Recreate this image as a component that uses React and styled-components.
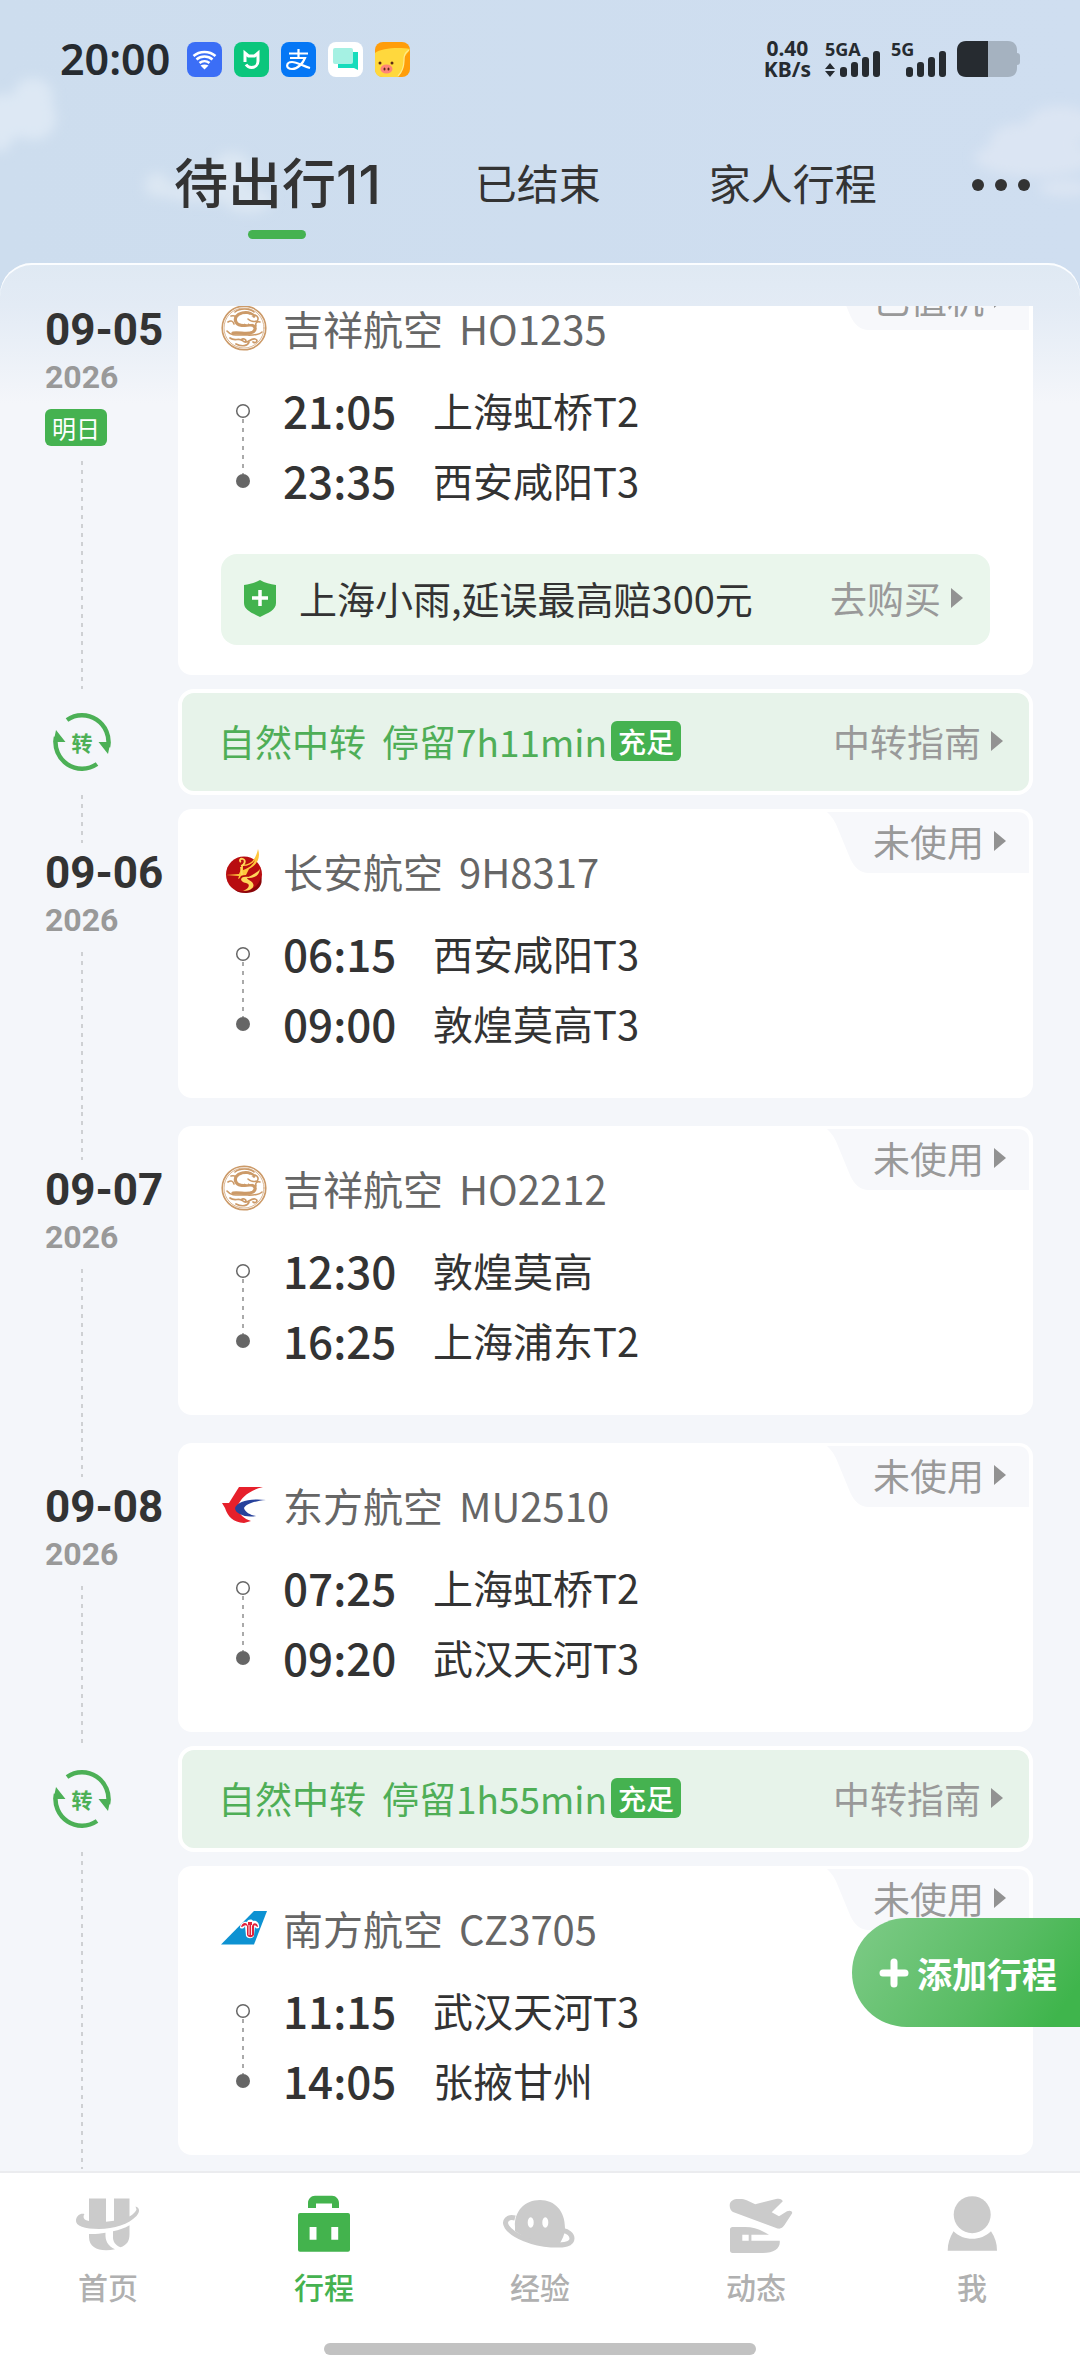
import React, {useState} from 'react';
import styled, {createGlobalStyle} from 'styled-components';

const GlobalStyle = createGlobalStyle`
    * {
        box-sizing: border-box;
    }

    body {
        margin: 0;
        background: #f4f6fa;
        font-family: "Noto Sans CJK SC", "Noto Sans", sans-serif;
        color: #333;
    }

    button {
        font-family: inherit;
        border: 0;
        padding: 0;
        margin: 0;
        background: none;
        cursor: pointer;
    }
`;

const Screen = styled.div`
    display: flex;
    flex-direction: column;
    height: 100vh;
    overflow: hidden;
    position: relative;
    background: linear-gradient(90deg, #cdddee, #cfdef0);
`;

const Sky = styled.svg`
    position: absolute;
    top: 0;
    width: 180px;
    height: 263px;
    left: ${props => props.$left};
    right: ${props => props.$right};
`;

/* status bar */

const StatusBar = styled.header`
    position: relative;
    display: flex;
    align-items: center;
    height: 78px;
    margin-top: 20px;
    padding: 0 60px;
    color: #262b30;
`;

const Clock = styled.time`
    font-family: "Noto Sans", sans-serif;
    font-size: 43px;
    font-weight: 600;
    line-height: 44px;
    margin-right: 17px;
`;

const AppIcons = styled.div`
    display: flex;
    gap: 12px;
    flex: 1;
`;

const AppIcon = styled.svg`
    width: 35px;
    height: 35px;
`;

const Speed = styled.div`
    display: flex;
    flex-direction: column;
    font-family: "Noto Sans", sans-serif;
    font-size: 21px;
    font-weight: 700;
    line-height: 21px;
    text-align: center;
    margin-right: 14px;
`;

const Signal = styled.div`
    position: relative;
    width: 56px;
    height: 36px;
    margin-right: 10px;
`;

const SignalName = styled.span`
    position: absolute;
    left: 0;
    top: 0;
    font-family: "Noto Sans", sans-serif;
    font-size: 18px;
    font-weight: 700;
    line-height: 16px;
`;

const Bars = styled.svg`
    position: absolute;
    right: 0;
    bottom: 0;
    width: 56px;
    height: 26px;
`;

const Battery = styled.svg`
    width: 63px;
    height: 36px;
`;

/* tabs */

const Tabs = styled.nav`
    position: relative;
    display: flex;
    align-items: center;
    height: 165px;
    padding: 8px 50px 0 174px;
`;

const Tab = styled.button`
    position: relative;
    color: #333;
    font-family: Inter, "Noto Sans CJK SC", sans-serif;
    font-size: ${props => (props.$active ? '54px' : '42px')};
    font-weight: ${props => (props.$active ? 500 : 400)};
    line-height: 60px;
    white-space: nowrap;
    margin-right: ${props => (props.$active ? '94px' : '108px')};

    &:last-of-type {
        margin-right: 0;
    }

    &::after {
        content: '';
        display: ${props => (props.$active ? 'block' : 'none')};
        position: absolute;
        left: calc(50% - 29px);
        bottom: -24px;
        width: 58px;
        height: 9px;
        border-radius: 5px;
        background: #45b250;
    }
`;

const TabGroup = styled.div`
    display: flex;
    align-items: center;
`;

const MoreButton = styled.button`
    display: flex;
    justify-content: space-between;
    flex-shrink: 0;
    width: 58px;
    margin-left: auto;
`;

const Dot = styled.span`
    width: 12px;
    height: 12px;
    border-radius: 50%;
    background: #333;
`;

/* trip list */

const Panel = styled.main`
    position: relative;
    flex: 1;
    min-height: 0;
    padding-top: 43px;
    border-radius: 32px 32px 0 0;
    background: linear-gradient(#dfe9f3, #e3ebf5 43px, #f4f6fa 140px);
    box-shadow: inset 0 2px 0 #fbfdff;
`;

const Scroller = styled.div`
    height: 100%;
    overflow: hidden;
`;

const TripList = styled.ol`
    list-style: none;
    margin: -54px 0 0;
    padding: 0 47px 0 0;
`;

const Item = styled.li`
    display: flex;
`;

const Side = styled.div`
    display: flex;
    flex-direction: column;
    align-items: flex-start;
    width: 178px;
    flex-shrink: 0;
    padding-left: 45px;
`;

const Dashes = styled.span`
    width: 2px;
    margin-left: 36px;
    flex: ${props => (props.$length ? '0 0 ' + props.$length : '1')};
    background: repeating-linear-gradient(#ced0d3 0 4px, transparent 4px 9px);
`;

const DateText = styled.strong`
    font-family: Roboto, sans-serif;
    font-size: 44px;
    font-weight: 700;
    line-height: 60px;
`;

const Year = styled.span`
    font-family: Roboto, sans-serif;
    font-size: 32px;
    font-weight: 700;
    line-height: 34px;
    color: #999;
    margin-bottom: 15px;
`;

const Badge = styled.span`
    padding: 0 7px;
    border-radius: 6px;
    background: #45b250;
    color: #fff;
    font-size: ${props => (props.$large ? '28px' : '24px')};
    font-weight: ${props => (props.$large ? 500 : 400)};
    line-height: ${props => (props.$large ? '40px' : '37px')};
    margin-bottom: ${props => (props.$large ? 0 : '15px')};
`;

const Card = styled.article`
    position: relative;
    flex: 1;
    min-height: 289px;
    margin: 14px 0;
    padding: 33px 43px 30px;
    border-radius: 14px;
    background: #fff;
`;

const Status = styled.button`
    position: absolute;
    top: 3px;
    right: 4px;
    width: 202px;
    height: 61px;
    display: flex;
    align-items: center;
    justify-content: flex-end;
    gap: 10px;
    padding: 0 23px 4px 0;
    color: #999;
    font-size: 37px;
    line-height: 56px;
`;

const StatusShape = styled.svg`
    position: absolute;
    inset: 0;
    width: 100%;
    height: 100%;
`;

const Label = styled.span`
    position: relative;
`;

const Arrow = styled.i`
    position: relative;
    width: 0;
    height: 0;
    border-left: 12px solid #929292;
    border-top: 10px solid transparent;
    border-bottom: 10px solid transparent;
`;

const Airline = styled.h2`
    display: flex;
    align-items: center;
    gap: 16px;
    margin: 0;
    height: 60px;
    padding-bottom: 3px;
    color: #666;
    font-size: 40px;
    font-weight: 400;
    line-height: 56px;
`;

const Logo = styled.svg`
    width: 46px;
    height: 46px;
`;

const Route = styled.div`
    display: flex;
    gap: 32px;
    margin-top: 17px;
    padding-left: 14px;
`;

const Track = styled.svg`
    width: 16px;
    height: 140px;
`;

const Stops = styled.div`
    display: flex;
    flex-direction: column;
`;

const Stop = styled.div`
    display: flex;
    align-items: center;
    height: 70px;
    padding-bottom: 3px;
    font-size: 40px;
    line-height: 60px;
`;

const Time = styled.time`
    width: 150px;
    font-size: 44px;
    font-weight: 500;
`;

const Insurance = styled.div`
    display: flex;
    align-items: center;
    height: 91px;
    margin-top: 38px;
    padding: 0 27px 4px 22px;
    border-radius: 16px;
    background: #eaf6ec;
    font-size: 38px;
    line-height: 60px;
`;

const Shield = styled.svg`
    width: 34px;
    height: 38px;
    margin-right: 22px;
`;

const LinkButton = styled.button`
    display: flex;
    align-items: center;
    gap: 10px;
    margin-left: auto;
    color: #999;
    font-size: 37px;
    line-height: 60px;
`;

const Transfer = styled.section`
    display: flex;
    align-items: center;
    flex: 1;
    height: 106px;
    padding: 0 26px 3px 36px;
    border: 4px solid #fff;
    border-radius: 16px;
    background: #e7f3ea;
    color: #4fae57;
    font-size: 37px;
    line-height: 60px;
`;

const Stay = styled.span`
    margin: 0 4px 0 16px;
`;

const TransferMark = styled.div`
    display: grid;
    place-items: center;
    width: 58px;
    height: 58px;
    margin: 24px 0 0 8px;
    color: #4cb056;
    font-size: 21px;
    font-weight: 700;
    line-height: 24px;

    > * {
        grid-area: 1 / 1;
    }
`;

const AddButton = styled.button`
    position: absolute;
    right: 0;
    bottom: 349px;
    display: flex;
    align-items: center;
    gap: 8px;
    height: 109px;
    padding: 0 23px 0 27px;
    border-radius: 55px 0 0 55px;
    background: linear-gradient(125deg, #7ecb87 0%, #58bc63 60%, #3fb54c 90%);
    color: #fff;
    font-size: 35px;
    font-weight: 700;
    line-height: 60px;
`;

/* bottom navigation */

const BottomBar = styled.nav`
    position: relative;
    display: flex;
    height: 205px;
    flex-shrink: 0;
    border-top: 2px solid #ebecef;
    background: #fff;

    &::after {
        content: '';
        position: absolute;
        left: 30%;
        right: 30%;
        bottom: 21px;
        height: 12px;
        border-radius: 6px;
        background: #c2c2c2;
    }
`;

const NavItem = styled.a`
    flex: 1;
    display: flex;
    flex-direction: column;
    align-items: center;
    padding-top: 21px;
    color: ${props => (props.$active ? '#45b250' : '#b0b0b0')};
    font-size: 30px;
    font-weight: 500;
    line-height: 40px;
    text-decoration: none;
`;

const NavIcon = styled.svg`
    width: 72px;
    height: 60px;
    margin-bottom: 12px;
    overflow: visible;
    fill: ${props => (props.$active ? '#43b34d' : '#cbcbcb')};
`;

const logos = {
    juneyao: (
        <g fill="none" stroke="#cc9a68" strokeLinecap="round">
            <circle cx="23" cy="23" r="21.8" strokeWidth="1.6" />
            <circle cx="23" cy="23" r="20" strokeWidth="0.7" />
            <path strokeWidth="3.2" d="M33 11c-4-4-8-4-12-3-5 1-8 5-6 9 2 5 10 3 14 3 5 0 7 4 3 7-5 3-13 0-20 1" />
            <path strokeWidth="1.6" d="M6 26c4 5 10 4 17 4s14 1 18-3M14 7c5-4 14-4 19 0M10 11c4-1 6 1 5 3M7 17c3-2 5-1 6 2M34 10c3 1 4 4 2 6-3 1-7 0-9-2M39 17c-3-1-5 1-4 4" />
            <path strokeWidth="1.7" d="M9 33c5 4 9-1 13 3s7-3 12-2c4 1 1 5-2 3M15 39c6 3 12 2 13-2M20 35c2-2 5-1 5 1" />
            <path strokeWidth="1.2" stroke="#fff" strokeDasharray="2 2" d="M31 11c-7-3-13-1-13 4 0 4 9 4 13 3" />
        </g>
    ),
    changan: (
        <g>
            <circle cx="23" cy="26.5" r="18" fill="#b80d10" />
            <path fill="#8a0508" d="M13 41c9 6 24 1 27-12 3 9-5 16-15 16-5 0-9-1-12-4z" />
            <path fill="#ffc63c" d="M37 1c3 9-1 16-9 20l-3 6c-4 0-6 1-6 3l-2 1 1-3-13-1 13-1c2-4 2-6 3-9 9 0 14-6 16-16z" />
            <path fill="#b80d10" d="M22 18c5 0 9-2 12-6-2 5-6 8-12 10z" />
            <path fill="#ffd75a" d="M39 21c-3 4-8 6-14 9 9 0 13-2 14-9zM28 29c-10-2-10 5-3 6 5 1 3 6-3 8 11 0 14-7 6-11-2-1-3-2 0-3z" />
            <path fill="none" stroke="#ffd75a" strokeWidth="1.8" d="M20 18c4-1 5-6 2-7s-4 2-2 3M20 19l1 8" />
        </g>
    ),
    eastern: (
        <g>
            <path fill="#e6202b" d="M18 5h24C29 8 20 15 16 25c2 7 7 12 14 14l-7 2C12 40 7 35 4 26l-3-5h7z" />
            <path fill="#27419b" d="M45 18c-11 1-20 4-22 8 1 4 6 7 12 8-10 2-21-2-21-8 2-6 14-10 31-8z" />
        </g>
    ),
    southern: (
        <g>
            <path fill="#0d92d2" d="M0 39.500 33 6h13L33 39.500z" />
            <path fill="#fff" d="M19 23c0-5 4-7 7-6 1-3 5-3 6-1 4-1 7 3 6 7-3 1-4 0-4-2l-1 10c-2 3-6 3-8 0l-1-10c-1 3-3 3-5 2z" />
            <path fill="#e0223b" d="M20 22c1-4 4-5 6-3l1 2V17h4v4l1-2c2-2 5 0 5 3-2 0-3-3-4-1v9c-2 3-5 3-7 0v-9c-2-2-3 1-6 1z" />
            <path stroke="#fff" strokeWidth="0.9" d="M28 20v10M30.500 20v10" />
        </g>
    )
};

const trips = [
    {
        date: '09-05', tag: '明日', status: '已值机', logo: 'juneyao', airline: '吉祥航空', flight: 'HO1235',
        stops: [['21:05', '上海虹桥T2'], ['23:35', '西安咸阳T3']],
        insurance: '上海小雨,延误最高赔300元'
    },
    {transfer: '停留7h11min'},
    {
        date: '09-06', status: '未使用', logo: 'changan', airline: '长安航空', flight: '9H8317',
        stops: [['06:15', '西安咸阳T3'], ['09:00', '敦煌莫高T3']]
    },
    {
        date: '09-07', status: '未使用', logo: 'juneyao', airline: '吉祥航空', flight: 'HO2212',
        stops: [['12:30', '敦煌莫高'], ['16:25', '上海浦东T2']]
    },
    {
        date: '09-08', status: '未使用', logo: 'eastern', airline: '东方航空', flight: 'MU2510',
        stops: [['07:25', '上海虹桥T2'], ['09:20', '武汉天河T3']]
    },
    {transfer: '停留1h55min'},
    {
        status: '未使用', logo: 'southern', airline: '南方航空', flight: 'CZ3705',
        stops: [['11:15', '武汉天河T3'], ['14:05', '张掖甘州']]
    }
];

const navItems = [
    {
        name: '首页',
        icon: (
            <g>
                <path d="M17 4.500h17v23.200l8-1V4.500h15.500v18c4-2.500 6.500-5 7-7l-1-3c4 1 5 5 1 9.500C57 30 42 35 27 35 13 35 3 32 4 26c.5-4 4-7 8.500-6-2 3-1 6 4.500 7z" />
                <path d="M17 40c6 .2 11-.3 16.500-1.300C33 47 36 52 43 55.300 29 58 17 55 17 43zM41 37.300c6-1.300 12-3.300 16.500-6v9c0 7-3 11-9 13-5-2-8-6-7.500-11z" />
            </g>
        )
    },
    {
        name: '行程',
        icon: (
            <g>
                <path d="M20 14V9c0-4 3-7.300 7-7.300h17c4 0 7 3.300 7 7.300v5h-7V9.500H28V14z" />
                <path fillRule="evenodd" d="M12 19h48a2 2 0 0 1 2 2v34.700a2 2 0 0 1-2 2H12a2 2 0 0 1-2-2V21a2 2 0 0 1 2-2zM21.600 33v12.700h6.900V33zM43.300 33v12.700h6.900V33z" />
            </g>
        )
    },
    {
        name: '经验',
        icon: (
            <g>
                <path fillRule="evenodd" d="M11 33C10 17 21 6 36 6s25 11 25 28c0 6-3 12-6 17C38 52 23 46 11 37zM26.700 23.300c-4 0-4 10.500 0 10.500s4-10.500 0-10.500zM41.300 23.300c-4 0-4 10.500 0 10.500s4-10.500 0-10.500z" />
                <path fill="none" stroke="#cbcbcb" strokeWidth="5" d="M11 24C4 22-1 27 3 33c6 9 26 17 44 18 14 .5 21-1 21-6.500 0-4-4-7-9-8" />
            </g>
        )
    },
    {
        name: '动态',
        icon: (
            <g>
                <path d="M9.700 11C10 6 15 4.500 19.700 5c3 0 5 .3 7 1.300l8.500 4L56 5c4-1 6 .5 6.800 2.200L51.700 18.300l7.300 4 8-5c3-1.500 6 0 5 2.300l-7.500 11.500c-2 3-4 4-7 3.400L13 18c-2-1-3.500-3.500-3.300-7z" />
                <path fillRule="evenodd" d="M10 35.500c0-1.500 1-2.500 2.500-2.500H25c9 0 16 3 24 7.700H31.400v6.100h28.300c1 7-5 12.200-17 12.200H12.500c-1.500 0-2.500-1-2.500-2.500zM22.300 40.700v6.100h6.400v-6.100z" />
            </g>
        )
    },
    {
        name: '我',
        icon: (
            <g>
                <circle cx="36.200" cy="20.700" r="18.500" />
                <path d="M17.500 37.300c10 10 27.500 10 37.500 0 4 6 6 12 6 19.400H11.700c0-7 2-13 5.800-19.400z" />
            </g>
        )
    }
];

function SignalBars({arrows}) {
    return (
        <Bars viewBox="0 0 56 26" fill="#262b30">
            {arrows && <path d="M5 12l5 6H0zM5 26l5-6H0z" />}
            <rect x="15" y="16" width="7" height="10" rx="3" />
            <rect x="26" y="11" width="7" height="15" rx="3" />
            <rect x="37" y="6" width="7" height="20" rx="3" />
            <rect x="48" y="0" width="7" height="26" rx="3" />
        </Bars>
    );
}

function StatusIcons() {
    return (
        <AppIcons>
            <AppIcon viewBox="0 0 35 35">
                <rect width="35" height="35" rx="8" fill="#3b6ef6" />
                <g fill="none" stroke="#fff" strokeWidth="2.500">
                    <path d="M6.500 14c6-5.500 16-5.500 22 0M9.500 17.500c4.500-4 11.500-4 16 0M12.500 21c3-2.500 7-2.500 10 0" />
                </g>
                <path fill="#fff" d="M13.500 23.500c2.500-1.500 5.500-1.500 8 0l-4 4z" />
            </AppIcon>
            <AppIcon viewBox="0 0 35 35">
                <rect width="35" height="35" rx="8" fill="#0bc67c" />
                <path fill="none" stroke="#fff" strokeWidth="3" d="M11 20v-9l3.500 3h6l3.500-3v8c0 4-3 6.500-6.500 6.500-2.500 0-4.500-1.500-5.500-3" />
            </AppIcon>
            <AppIcon viewBox="0 0 35 35">
                <rect width="35" height="35" rx="8" fill="#0577f5" />
                <path fill="none" stroke="#fff" strokeWidth="2.200" d="M8 11.500h19M17.500 7v9M9 16h15c-2 5-7 11-13 11-7 0-6-7 0-7 5 0 11 4 18 6" />
            </AppIcon>
            <AppIcon viewBox="0 0 35 35">
                <rect width="35" height="35" rx="8" fill="#fff" />
                <path fill="#16dcbc" d="M12 10h18v18l-4-2H10V12z" />
                <rect x="5" y="6" width="20" height="16" rx="2" fill="#a5f1e3" />
            </AppIcon>
            <AppIcon viewBox="0 0 35 35">
                <rect width="35" height="35" rx="8" fill="#ff9d0a" />
                <path fill="#ffd83d" d="M0 11c6-5 24-6 35-4-2 4-4 5-6 9 1 8-2 15-6 19H8c-5 0-8-3-8-8z" />
                <path fill="none" stroke="#ffe98a" strokeWidth="1.200" d="M34 8c-4 3-5 5-5 10 0 7-2 12-6 16" />
                <ellipse cx="11.500" cy="27" rx="6" ry="4.500" fill="#ff8577" />
                <g fill="#5b2b16">
                    <circle cx="5" cy="21" r="1.500" />
                    <circle cx="17" cy="21" r="1.500" />
                    <ellipse cx="9.500" cy="27" rx="1" ry="1.500" />
                    <ellipse cx="13.500" cy="27" rx="1" ry="1.500" />
                </g>
            </AppIcon>
        </AppIcons>
    );
}

function Clouds() {
    return (
        <>
            <Sky $left="0" viewBox="0 0 180 263" aria-hidden="true">
                <filter id="soft" x="-30%" y="-50%" width="160%" height="200%"><feGaussianBlur stdDeviation="6" /></filter>
                <g fill="#dde8f4" filter="url(#soft)">
                    <circle cx="33" cy="98" r="20" />
                    <circle cx="34" cy="118" r="22" />
                    <circle cx="4" cy="118" r="24" />
                    <circle cx="0" cy="142" r="10" />
                </g>
            </Sky>
            <Sky $left="130px" viewBox="0 0 180 263" aria-hidden="true">
                <g fill="#dce7f3" filter="url(#soft)">
                    <circle cx="27" cy="185" r="12" />
                    <circle cx="102" cy="172" r="20" />
                    <ellipse cx="75" cy="192" rx="46" ry="10" />
                    <ellipse cx="118" cy="200" rx="24" ry="13" />
                </g>
            </Sky>
            <Sky $right="0" viewBox="0 0 180 263" aria-hidden="true">
                <g fill="#dbe5f3" filter="url(#soft)">
                    <ellipse cx="160" cy="126" rx="34" ry="20" />
                    <ellipse cx="120" cy="142" rx="30" ry="18" />
                    <ellipse cx="135" cy="158" rx="60" ry="18" />
                    <ellipse cx="165" cy="188" rx="26" ry="8" />
                </g>
            </Sky>
        </>
    );
}

function TransferItem({stay}) {
    return (
        <Item>
            <Side>
                <TransferMark>
                    <svg width="58" height="58" viewBox="0 0 58 58" aria-hidden="true">
                        <g fill="none" stroke="currentColor" strokeWidth="4.500">
                            <path d="M14 7A26.500 26.500 0 0 1 55 34" />
                            <path d="M44 51A26.500 26.500 0 0 1 3 24" />
                        </g>
                        <path fill="currentColor" d="M45.500 29h12L55 41zM12.500 29H.500L3 17z" />
                    </svg>
                    <span>转</span>
                </TransferMark>
            </Side>
            <Transfer>
                <span>自然中转</span>
                <Stay>{stay}</Stay>
                <Badge $large>充足</Badge>
                <LinkButton>中转指南<Arrow /></LinkButton>
            </Transfer>
        </Item>
    );
}

function FlightItem({trip}) {
    return (
        <Item>
            <Side>
                {trip.date && (
                    <>
                        <Dashes $length="48px" />
                        <DateText>{trip.date}</DateText>
                        <Year>2026</Year>
                    </>
                )}
                {trip.tag && <Badge>{trip.tag}</Badge>}
                <Dashes />
            </Side>
            <Card>
                <Status>
                    <StatusShape viewBox="0 0 202 61" preserveAspectRatio="none" aria-hidden="true">
                        <path fill="#f7f8fb" d="M0 0h190q12 0 12 12v49H42c-9 0-15-6-19-15L11 17Q7 6 0 0z" />
                    </StatusShape>
                    <Label>{trip.status}</Label>
                    <Arrow />
                </Status>
                <Airline>
                    <Logo viewBox="0 0 46 46" aria-hidden="true">{logos[trip.logo]}</Logo>
                    <span>{trip.airline}</span>
                    <span>{trip.flight}</span>
                </Airline>
                <Route>
                    <Track viewBox="0 0 16 140" aria-hidden="true">
                        <path stroke="#aaa" strokeWidth="2" strokeDasharray="4 5" d="M8 43v55" />
                        <circle cx="8" cy="35" r="6.300" fill="#fff" stroke="#666" strokeWidth="1.500" />
                        <circle cx="8" cy="105" r="7" fill="#666" />
                    </Track>
                    <Stops>
                        {trip.stops.map(([time, place]) => (
                            <Stop key={time}>
                                <Time>{time}</Time>
                                {place}
                            </Stop>
                        ))}
                    </Stops>
                </Route>
                {trip.insurance && (
                    <Insurance>
                        <Shield viewBox="0 0 34 38" aria-hidden="true">
                            <path fill="#43b34e" d="M17 1c5 3 10 4 16 5v18c0 7-8 10-16 14C9 34 1 31 1 24V6c6-1 11-2 16-5z" />
                            <path stroke="#fff" strokeWidth="3.500" d="M17 11v16M9 19h16" />
                        </Shield>
                        <span>{trip.insurance}</span>
                        <LinkButton>去购买<Arrow /></LinkButton>
                    </Insurance>
                )}
            </Card>
        </Item>
    );
}

const tabNames = ['待出行11', '已结束', '家人行程'];

function App() {
    const [tab, setTab] = useState(0);

    return (
        <Screen>
            <GlobalStyle />
            <Clouds />
            <StatusBar>
                <Clock>20:00</Clock>
                <StatusIcons />
                <Speed>
                    <span>0.40</span>
                    <span>KB/s</span>
                </Speed>
                <Signal>
                    <SignalName>5GA</SignalName>
                    <SignalBars arrows />
                </Signal>
                <Signal>
                    <SignalName>5G</SignalName>
                    <SignalBars />
                </Signal>
                <Battery viewBox="0 0 63 36">
                    <path fill="#a5b2c0" d="M31 0h20c6 0 9 4 9 9v3c2 0 3 1 3 3v6c0 2-1 3-3 3v3c0 5-3 9-9 9H31z" />
                    <path fill="#262b30" d="M9 0h22v36H9c-6 0-9-4-9-9V9c0-5 3-9 9-9z" />
                </Battery>
            </StatusBar>
            <Tabs>
                <TabGroup>
                    {tabNames.map((name, i) => (
                        <Tab key={name} $active={i === tab} onClick={() => setTab(i)}>{name}</Tab>
                    ))}
                </TabGroup>
                <MoreButton aria-label="更多"><Dot /><Dot /><Dot /></MoreButton>
            </Tabs>
            <Panel>
                <Scroller>
                    <TripList>
                        {trips.map((trip, i) => (
                            trip.transfer
                                ? <TransferItem key={i} stay={trip.transfer} />
                                : <FlightItem key={i} trip={trip} />
                        ))}
                    </TripList>
                </Scroller>
            </Panel>
            <AddButton>
                <svg width="30" height="30" viewBox="0 0 30 30" aria-hidden="true">
                    <path stroke="#fff" strokeWidth="7" strokeLinecap="round" d="M15 4v22M4 15h22" />
                </svg>
                添加行程
            </AddButton>
            <BottomBar>
                {navItems.map((item, i) => (
                    <NavItem key={item.name} href="#" $active={i === 1}>
                        <NavIcon viewBox="0 0 72 60" $active={i === 1} aria-hidden="true">{item.icon}</NavIcon>
                        {item.name}
                    </NavItem>
                ))}
            </BottomBar>
        </Screen>
    );
}

export default App;
